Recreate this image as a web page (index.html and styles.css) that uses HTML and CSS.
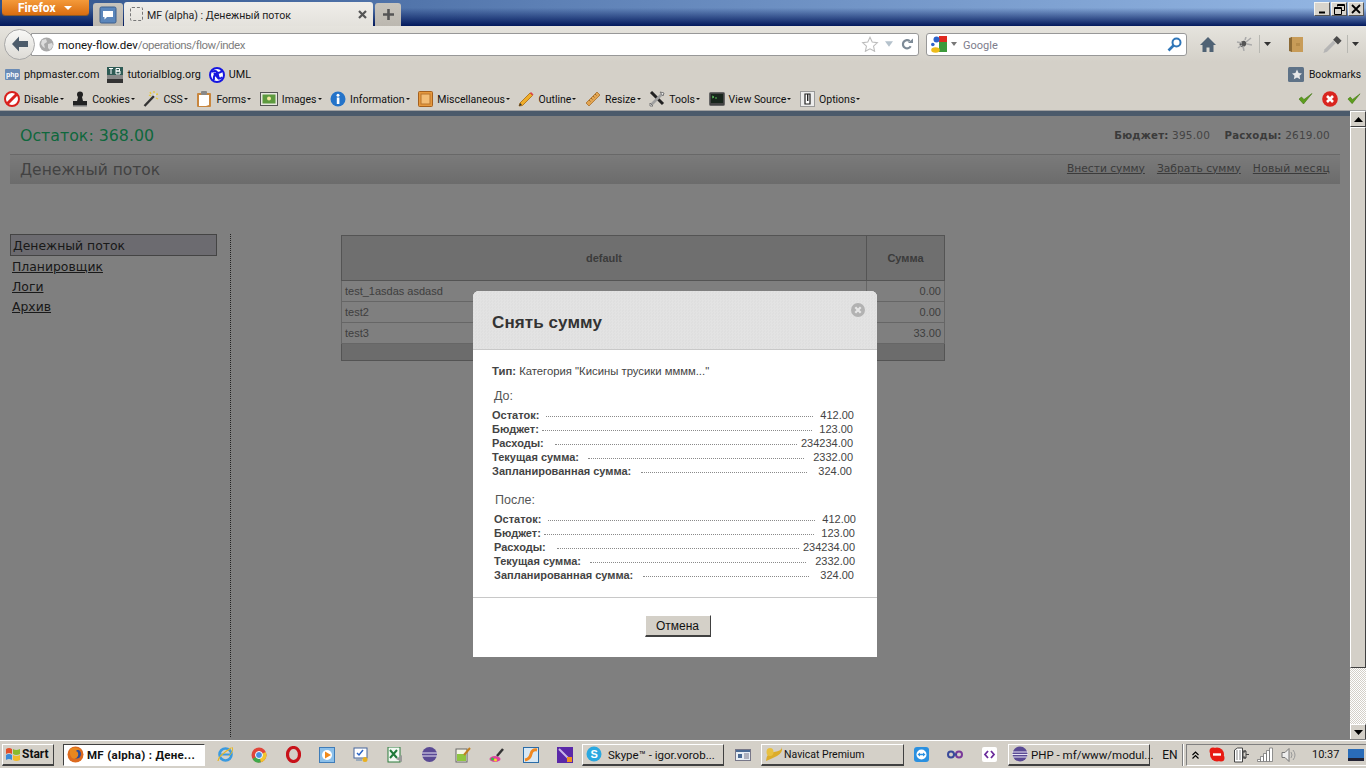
FILE: index.html
```html
<!DOCTYPE html>
<html lang="en">
<head>
    <meta charset="UTF-8">
    <meta name="viewport" content="width=device-width, initial-scale=1.0">
    <title>MF (alpha) : Денежный поток</title>
    <link rel="stylesheet" href="styles.css">
</head>
<body>
    <!-- Browser title bar with tabs -->
    <div class="titlebar">
        <div class="ff-button">Firefox <span class="ff-arrow"></span></div>
        <div class="tab-side tab-panorama">
            <svg width="18" height="18" viewBox="0 0 18 18"><rect x="1" y="1" width="16" height="16" rx="1.5" fill="#5b86bb" stroke="#3c5f8d"/><path d="M4 5h10v6H8l-2.5 2.5V11H4z" fill="#fff"/></svg>
        </div>
        <div class="tab-active">
            <span class="tab-favicon"></span>
            <span class="tab-title">MF (alpha) : Денежный поток</span>
            <svg width="9" height="9" viewBox="0 0 9 9"><path d="M1 1l7 7M8 1L1 8" stroke="#555" stroke-width="2.2"/></svg>
        </div>
        <div class="tab-side tab-new">
            <svg width="13" height="13" viewBox="0 0 13 13"><path d="M6.5 1v11M1 6.5h11" stroke="#555" stroke-width="2.6"/></svg>
        </div>
        <div class="win-buttons">
            <div class="win-btn"><svg width="9" height="9" viewBox="0 0 9 9"><path d="M1 7.5h6" stroke="#000" stroke-width="2"/></svg></div>
            <div class="win-btn"><svg width="11" height="11" viewBox="0 0 11 11"><path d="M3.5 2.5V.5h7v6H8M.5 3.5h7v7h-7z" fill="none" stroke="#000"/><path d="M3 1.5h7M0 4.5h8" stroke="#000"/></svg></div>
            <div class="win-btn"><svg width="10" height="10" viewBox="0 0 10 10"><path d="M1 1l8 8M9 1L1 9" stroke="#000" stroke-width="1.8"/></svg></div>
        </div>
    </div>

    <!-- Navigation bar -->
    <div class="navbar">
        <div class="back-btn">
            <svg width="20" height="18" viewBox="0 0 20 18"><path d="M9 1.5L2 9l7 7.5V12h9V6H9z" fill="#4d5c6b"/></svg>
        </div>
        <div class="urlbar">
            <svg class="globe" width="15" height="15" viewBox="0 0 15 15"><circle cx="7.5" cy="7.5" r="7" fill="#a9a9a9"/><path d="M3 3l4-1 1 3-3 2 1 4-2-1-2-3zM9 7l4-1 1 3-3 4-2-2z" fill="#dcdcdc"/></svg>
            <span class="url-host">money-flow.dev</span><span class="url-path">/operations/flow/index</span>
            <svg class="url-star" width="18" height="16" viewBox="0 0 20 18"><path d="M10 1.5l2.5 5.3 5.8.7-4.3 4 1.2 5.7L10 14.4l-5.2 2.8L6 11.500l-4.300-4 5.800-.7z" fill="#fff" stroke="#bcbcbc" stroke-width="1.2"/></svg>
            <svg class="url-drop" width="8" height="6" viewBox="0 0 10 7"><path d="M0 0h10L5 7z" fill="#b5c2cc"/></svg>
            <svg class="url-reload" width="12" height="12" viewBox="0 0 13 13"><path d="M10.5 9A4.5 4.5 0 1 1 9.5 3.3" fill="none" stroke="#7d8a96" stroke-width="2.4"/><path d="M7.5 5.5L13 .5v5z" fill="#7d8a96"/></svg>
        </div>
        <div class="searchbar">
            <svg width="16" height="17" viewBox="0 0 16 17"><rect x="8" y="0" width="8" height="6" fill="#e02a20"/><rect x="8" y="6" width="8" height="10" fill="#3d9a3c"/><rect x="0" y="7" width="8" height="5" fill="#fff"/><circle cx="5.5" cy="3.5" r="3" fill="#2c62c9"/><circle cx="1.8" cy="8.5" r="1.8" fill="#2c62c9"/><ellipse cx="4.5" cy="14" rx="4.3" ry="2.7" fill="#edbb19"/></svg>
            <svg class="search-drop" width="6" height="4" viewBox="0 0 6 4"><path d="M0 0h6L3 4z" fill="#777"/></svg>
            <span class="search-text">Google</span>
            <svg width="15" height="15" viewBox="0 0 15 15"><circle cx="9.5" cy="5.5" r="4" fill="none" stroke="#2f76b8" stroke-width="2"/><path d="M6.5 8.5L1.5 13.5" stroke="#2f76b8" stroke-width="2.6"/></svg>
        </div>
        <svg class="nav-home" width="16" height="15" viewBox="0 0 16 15"><path d="M8 0L0 8h2.5v7h4v-4.5h3V15h4V8H16z" fill="#4f6274"/></svg>
        <svg class="nav-bug" width="16" height="14" viewBox="0 0 16 14"><ellipse cx="7" cy="7" rx="3.5" ry="2.8" fill="#555" transform="rotate(-30 7 7)"/><path d="M1 5l5 1M2 11l4-3M7 9l1 5M10 5l5-4M11 7l5 1M9 3l1-3" stroke="#aaa" stroke-width="1.5"/></svg>
        <span class="nav-sep"></span>
        <svg class="nav-arrow" width="7" height="4" viewBox="0 0 7 4"><path d="M0 0h7L3.5 4z" fill="#333"/></svg>
        <svg class="nav-book" width="14" height="15" viewBox="0 0 14 15"><path d="M2 0h12v15H2z" fill="#c89c58"/><path d="M0 1l3-1v15l-3-1z" fill="#8c6a35"/><path d="M8 6v3M10 6v3" stroke="#a67c3c"/></svg>
        <svg class="nav-dropper" width="19" height="17" viewBox="0 0 15 14"><path d="M0 14l1-3 7-7 2 2-7 7z" fill="#b5b5b5"/><path d="M8 3l3-3 4 4-3 3z" fill="#4a4a4a"/></svg>
        <span class="nav-sep nav-sep-last"></span>
        <svg class="nav-arrow" width="7" height="4" viewBox="0 0 7 4"><path d="M0 0h7L3.5 4z" fill="#333"/></svg>
    </div>

    <!-- Bookmarks toolbar -->
    <div class="bookmarks">
        <div class="bm-item">
            <svg width="15" height="14" viewBox="0 0 15 14"><rect y="1" width="15" height="11" rx="1" fill="#6a8bb5"/><text x="1" y="9" class="bm-php">php</text></svg>
            phpmaster.com
        </div>
        <div class="bm-item">
            <svg width="16" height="16" viewBox="0 0 16 16"><rect width="16" height="8" fill="#2e5b55"/><rect y="8" width="16" height="4" fill="#888"/><rect y="12" width="16" height="4" fill="#333"/><path d="M2 1.5h4M4 1.5V7M9 1.5V7M9 1.5h3.5v2.5H9M9 4h4v3H9" stroke="#fff" fill="none"/></svg>
            tutorialblog.org
        </div>
        <div class="bm-item">
            <svg width="16" height="16" viewBox="0 0 16 16"><circle cx="8" cy="8" r="7" fill="#fff" stroke="#1616e0" stroke-width="2"/><path d="M3 5q5-3 6 3t4 2M5 13q-1-6 4-7t3-3M5 6l5 6" fill="none" stroke="#1616e0" stroke-width="2"/></svg>
            UML
        </div>
        <div class="bm-right">
            <svg width="16" height="15" viewBox="0 0 16 15"><rect width="16" height="15" rx="1.5" fill="#5e7287"/><path d="M9 2.5l1.6 3.5 3.4.4-2.5 2.4.7 3.5L9 10.5l-3.2 1.8.7-3.5L4 6.4 7.4 6z" fill="#e8e8e8"/></svg>
            Bookmarks
        </div>
    </div>

    <!-- Web developer toolbar -->
    <div class="devbar">
        <div class="dev-item">
            <svg width="16" height="16" viewBox="0 0 16 16"><circle cx="8" cy="8" r="7" fill="#fff" stroke="#d9201c" stroke-width="2"/><path d="M3.5 12.5l9-9" stroke="#d9201c" stroke-width="3"/></svg>
            <span class="dev-label">Disable</span>
        </div>
        <div class="dev-item">
            <svg width="16" height="16" viewBox="0 0 16 16"><circle cx="8" cy="3.5" r="3" fill="#222"/><path d="M6 6h4l1 4h4v4H1v-4h4z" fill="#222"/><rect x="1" y="14" width="14" height="1.5" fill="#777"/></svg>
            <span class="dev-label">Cookies</span>
        </div>
        <div class="dev-item">
            <svg width="16" height="16" viewBox="0 0 16 16"><path d="M1.5 15L11 5" stroke="#333" stroke-width="2.4"/><path d="M11 5l2-2" stroke="#ddd" stroke-width="2.4"/><path d="M7 1l1 2M13 7l2 1M11 0v2M15 3l-2 .5M8 5l-2-1" stroke="#e8c93a" stroke-width="1.3"/></svg>
            <span class="dev-label">CSS</span>
        </div>
        <div class="dev-item">
            <svg width="16" height="16" viewBox="0 0 16 16"><rect x="1" y="2" width="14" height="14" rx="1" fill="#c8863e"/><path d="M3 4h10v10l-3 1H3z" fill="#fff"/><rect x="5" y="0" width="6" height="4" rx="1" fill="#888"/></svg>
            <span class="dev-label">Forms</span>
        </div>
        <div class="dev-item">
            <svg width="18" height="14" viewBox="0 0 18 14"><rect x=".5" y=".5" width="17" height="13" fill="#e8e8e0" stroke="#555"/><rect x="2.5" y="2.5" width="13" height="9" fill="#5d9a3e"/><circle cx="9" cy="6.5" r="2" fill="#f0e8a0"/></svg>
            <span class="dev-label">Images</span>
        </div>
        <div class="dev-item">
            <svg width="16" height="16" viewBox="0 0 16 16"><circle cx="8" cy="8" r="7.5" fill="#2473c9"/><rect x="6.8" y="6.5" width="2.6" height="6.5" fill="#fff"/><circle cx="8" cy="4.2" r="1.5" fill="#fff"/></svg>
            <span class="dev-label">Information</span>
        </div>
        <div class="dev-item">
            <svg width="15" height="16" viewBox="0 0 15 16"><rect x=".5" y=".5" width="14" height="15" rx="1" fill="#e6993e" stroke="#a4601e"/><rect x="3" y="3" width="9" height="10" fill="#f3bd76" stroke="#b8752c"/></svg>
            <span class="dev-label">Miscellaneous</span>
        </div>
        <div class="dev-item">
            <svg width="16" height="16" viewBox="0 0 16 16"><path d="M2 12L12 2l2.5 2.5-10 10L1 15z" fill="#f0ae2a" stroke="#a86a10" stroke-width=".8"/><path d="M12 2l1-1 2.5 2.5-1 1z" fill="#e0404a"/><path d="M1 15l1-3 2 2z" fill="#333"/></svg>
            <span class="dev-label">Outline</span>
        </div>
        <div class="dev-item">
            <svg width="16" height="16" viewBox="0 0 16 16"><path d="M1 12L12 1l3 3L4 15z" fill="#e2a552" stroke="#a8702c" stroke-width=".8"/><path d="M4 9l1.5 1.5M6 7l1.5 1.5M8 5l1.5 1.5M10 3l1.5 1.5" stroke="#8a5a20" stroke-width=".8"/></svg>
            <span class="dev-label">Resize</span>
        </div>
        <div class="dev-item">
            <svg width="16" height="16" viewBox="0 0 16 16"><path d="M2 1l12 12" stroke="#222" stroke-width="3"/><path d="M14 2L2 14" stroke="#a0a0a0" stroke-width="2.6"/><path d="M11 1l4 1-1 3z" fill="#fff" stroke="#777"/><path d="M1 12l3 3-3 0z" fill="#fff" stroke="#777"/></svg>
            <span class="dev-label">Tools</span>
        </div>
        <div class="dev-item">
            <svg width="16" height="14" viewBox="0 0 16 14"><rect x=".5" y=".5" width="15" height="13" rx="1" fill="#444" stroke="#666"/><rect x="2" y="2" width="12" height="9" fill="#18251c"/><path d="M3 4l2 1-2 1M6 6h2" stroke="#6be06b" stroke-width=".8" fill="none"/></svg>
            <span class="dev-label">View Source</span>
        </div>
        <div class="dev-item">
            <svg width="15" height="16" viewBox="0 0 15 16"><rect x=".5" y=".5" width="14" height="15" fill="#ececec" stroke="#999"/><path d="M5 3h5v10H5z" fill="#fff" stroke="#222" stroke-width="1.2"/><rect x="7" y="3" width="1.4" height="7" fill="#222"/></svg>
            <span class="dev-label">Options</span>
        </div>
        <div class="dev-status">
            <svg width="15" height="13" viewBox="0 0 15 13"><path d="M1 7l4.5 5L14 1.5 6 7.5 3.5 5z" fill="#5d9e1e" stroke="#3e7410" stroke-width=".6"/></svg>
            <svg width="16" height="16" viewBox="0 0 16 16"><circle cx="8" cy="8" r="7.8" fill="#d9251f"/><path d="M5 5l6 6M11 5l-6 6" stroke="#fff" stroke-width="2.6"/></svg>
            <svg width="14" height="13" viewBox="0 0 15 13"><path d="M1 7l4.5 5L14 1.5 6 7.5 3.5 5z" fill="#5d9e1e" stroke="#3e7410" stroke-width=".6"/></svg>
        </div>
    </div>

    <!-- Viewport -->
    <div class="viewport">
        <div class="page">
            <div class="page-strip"></div>
            <div class="summary">
                <div class="balance">Остаток: 368.00</div>
                <div class="budget"><strong>Бюджет:</strong> 395.00 <strong class="spent">Расходы:</strong> 2619.00</div>
            </div>
            <div class="heading">
                <h1>Денежный поток</h1>
                <div class="heading-links">
                    <a href="#">Внести сумму</a>
                    <a href="#">Забрать сумму</a>
                    <a href="#">Новый месяц</a>
                </div>
            </div>
            <div class="content">
                <ul class="sidebar">
                    <li class="sidebar-active">Денежный поток</li>
                    <li><a href="#">Планировщик</a></li>
                    <li><a href="#">Логи</a></li>
                    <li><a href="#">Архив</a></li>
                </ul>
                <div class="main">
                    <table class="flow-table">
                        <thead>
                            <tr><th>default</th><th class="col-sum">Сумма</th></tr>
                        </thead>
                        <tbody>
                            <tr><td>test_1asdas asdasd</td><td class="num">0.00</td></tr>
                            <tr><td>test2</td><td class="num">0.00</td></tr>
                            <tr><td>test3</td><td class="num">33.00</td></tr>
                        </tbody>
                        <tfoot>
                            <tr><td colspan="2"></td></tr>
                        </tfoot>
                    </table>
                </div>
            </div>

            <div class="overlay"></div>

            <div class="modal">
                <div class="modal-head">
                    <h2>Снять сумму</h2>
                    <svg class="modal-close" width="14" height="14" viewBox="0 0 14 14"><circle cx="7" cy="7" r="7" fill="#b2b2b2"/><path d="M4.3 4.3l5.4 5.4M9.7 4.3l-5.4 5.4" stroke="#e6e6e6" stroke-width="2.2"/></svg>
                </div>
                <div class="modal-body">
                    <p class="modal-type"><strong>Тип:</strong> Категория "Кисины трусики мммм..."</p>
                    <div class="state">
                        <h3>До:</h3>
                        <div class="state-row"><strong>Остаток:</strong><span class="dots"></span><span>412.00</span></div>
                        <div class="state-row"><strong>Бюджет:</strong><span class="dots"></span><span>123.00</span></div>
                        <div class="state-row"><strong>Расходы:</strong><span class="dots"></span><span>234234.00</span></div>
                        <div class="state-row"><strong>Текущая сумма:</strong><span class="dots"></span><span>2332.00</span></div>
                        <div class="state-row"><strong>Запланированная сумма:</strong><span class="dots"></span><span>324.00</span></div>
                    </div>
                    <div class="state state-after">
                        <h3>После:</h3>
                        <div class="state-row"><strong>Остаток:</strong><span class="dots"></span><span>412.00</span></div>
                        <div class="state-row"><strong>Бюджет:</strong><span class="dots"></span><span>123.00</span></div>
                        <div class="state-row"><strong>Расходы:</strong><span class="dots"></span><span>234234.00</span></div>
                        <div class="state-row"><strong>Текущая сумма:</strong><span class="dots"></span><span>2332.00</span></div>
                        <div class="state-row"><strong>Запланированная сумма:</strong><span class="dots"></span><span>324.00</span></div>
                    </div>
                </div>
                <div class="modal-foot">
                    <button class="cancel-btn">Отмена</button>
                </div>
            </div>
        </div>

        <div class="scrollbar">
            <div class="sb-btn"><svg width="9" height="5" viewBox="0 0 9 5"><path d="M0 5h9L4.5 0z" fill="#000"/></svg></div>
            <div class="sb-thumb"></div>
            <div class="sb-track"></div>
            <div class="sb-btn"><svg width="9" height="5" viewBox="0 0 9 5"><path d="M0 0h9L4.5 5z" fill="#000"/></svg></div>
        </div>
    </div>

    <!-- Windows taskbar -->
    <div class="taskbar">
        <div class="start-btn">
            <svg width="16" height="15" viewBox="0 0 16 15"><path d="M1 2q3-2 6 0v5q-3-2-6 0z" fill="#e2502a"/><path d="M8 2q3 2 7 0v5q-4 2-7 0z" fill="#8abb2d"/><path d="M1 8q3-2 6 0v5q-3-2-6 0z" fill="#3a8ad8"/><path d="M8 8q3 2 7 0v5q-4 2-7 0z" fill="#f2bb2a"/></svg>
            Start
        </div>
        <div class="task task-active">
            <svg width="17" height="17" viewBox="0 0 17 17"><circle cx="8.5" cy="8.5" r="8" fill="#dc6a1e"/><circle cx="9.5" cy="8" r="4.5" fill="#2c4d9a"/><path d="M3 3q6-3 11 1-4-1-5 1 3 1 2 5-2 4-6 2-3-3-2-9z" fill="#e8871f"/></svg>
            <span class="task-text">MF (alpha) : Дене...</span>
        </div>
        <div class="quick">
            <svg width="17" height="17" viewBox="0 0 17 17"><circle cx="8.5" cy="8.5" r="6" fill="none" stroke="#3a9ae0" stroke-width="2.6"/><path d="M4 8.5h9" stroke="#3a9ae0" stroke-width="2"/><path d="M1 15Q1 10 14 2" fill="none" stroke="#e8b820" stroke-width="1.2"/><path d="M15 1q2 4-3 9" fill="none" stroke="#e8b820" stroke-width="1"/></svg>
        </div>
        <div class="quick">
            <svg width="16" height="16" viewBox="0 0 16 16"><circle cx="8" cy="8" r="7.5" fill="#e0453a"/><path d="M8 8L1.5 12A7.5 7.5 0 0 0 10 15.3z" fill="#3faa4a"/><path d="M8 8l2 7.3A7.5 7.5 0 0 0 14.8 5z" fill="#f1c52e"/><circle cx="8" cy="8" r="3.5" fill="#4a8ee0" stroke="#fff"/></svg>
        </div>
        <div class="quick">
            <svg width="15" height="17" viewBox="0 0 15 17"><ellipse cx="7.5" cy="8.5" rx="6" ry="7" fill="none" stroke="#c8121a" stroke-width="3.2"/></svg>
        </div>
        <div class="quick">
            <svg width="16" height="16" viewBox="0 0 16 16"><rect x=".5" y=".5" width="15" height="15" fill="#8cc0ea" stroke="#3f7cb8"/><circle cx="8" cy="8" r="5" fill="#fff"/><path d="M6 4.5L12 8l-6 3.5z" fill="#f08a1c"/></svg>
        </div>
        <div class="quick">
            <svg width="16" height="16" viewBox="0 0 16 16"><rect x="1" y="1" width="13" height="10" fill="#fff" stroke="#44659c"/><path d="M4 6l2 2 4-5" stroke="#2a64c4" fill="none" stroke-width="1.5"/><circle cx="12" cy="12.5" r="2.5" fill="#e8b020"/><rect x="3" y="12" width="6" height="2" fill="#9ab"/></svg>
        </div>
        <div class="quick">
            <svg width="16" height="16" viewBox="0 0 16 16"><rect x="1" y="0" width="12" height="15" fill="#f2f8f2" stroke="#2a7a3a"/><path d="M3 3l7 8M10 3l-7 8" stroke="#1f7a3a" stroke-width="2"/><path d="M9 12l6 3V8z" fill="#9a9a9a"/></svg>
        </div>
        <div class="quick">
            <svg width="15" height="15" viewBox="0 0 15 15"><circle cx="7.5" cy="7.5" r="7.5" fill="#5a4a94"/><path d="M0 6h15M0 9h15" stroke="#e8e4f4" stroke-width="1"/></svg>
        </div>
        <div class="quick">
            <svg width="16" height="16" viewBox="0 0 16 16"><rect x="1" y="2" width="11" height="13" fill="#f4f4e4" stroke="#666"/><rect x="2" y="7" width="9" height="7" fill="#8ec63f"/><path d="M15 1L9 8" stroke="#c08020" stroke-width="2"/></svg>
        </div>
        <div class="quick">
            <svg width="17" height="17" viewBox="0 0 17 17"><ellipse cx="6" cy="13" rx="5.5" ry="3" fill="#e040a0"/><circle cx="3.5" cy="13" r="1.5" fill="#30c040"/><circle cx="6.5" cy="14" r="1.5" fill="#f0e020"/><path d="M8 10l6-7" stroke="#333" stroke-width="2.5"/></svg>
        </div>
        <div class="quick">
            <svg width="16" height="16" viewBox="0 0 16 16"><rect x=".5" y=".5" width="15" height="15" fill="#d8e8f4" stroke="#2a6ca8"/><path d="M2 13Q7 12 8 7T14 3" fill="none" stroke="#f08820" stroke-width="3"/></svg>
        </div>
        <div class="quick">
            <svg width="16" height="16" viewBox="0 0 16 16"><rect width="16" height="16" fill="#5a28a8"/><path d="M2 2l10 10" stroke="#c8b8e8" stroke-width="2"/><path d="M10 10h5v5h-5z" fill="#f09020"/></svg>
        </div>
        <div class="task">
            <svg width="16" height="16" viewBox="0 0 16 16"><circle cx="8" cy="8" r="7.5" fill="#2aa8e0"/><text x="4.5" y="12" class="skype-s">S</text></svg>
            <span class="task-text">Skype™ - igor.vorob...</span>
        </div>
        <div class="quick quick-wide">
            <svg width="16" height="12" viewBox="0 0 16 12"><rect x=".5" y=".5" width="15" height="11" fill="#e8eef4" stroke="#778"/><rect x="1" y="1" width="14" height="2" fill="#4a6a94"/><rect x="3" y="5" width="4" height="4" fill="#4a6a94"/><path d="M9 5h5M9 7h5M9 9h5" stroke="#778"/></svg>
        </div>
        <div class="task task-navicat">
            <svg width="18" height="16" viewBox="0 0 18 16"><path d="M1 15Q1 7 9 6T17 1q1 6-5 9T1 15z" fill="#dcac2a"/><ellipse cx="5" cy="6" rx="3.5" ry="4" fill="#e8c040"/></svg>
            <span class="task-text">Navicat Premium</span>
        </div>
        <div class="quick">
            <svg width="15" height="16" viewBox="0 0 15 16"><rect width="15" height="15" rx="3" fill="#2a90e0"/><circle cx="7.5" cy="7.5" r="5" fill="#fff"/><path d="M3.5 7.5l2.5-2v1.3h3V5.5l2.5 2-2.5 2V8.2H6v1.3z" fill="#2a90e0"/></svg>
        </div>
        <div class="quick">
            <svg width="16" height="9" viewBox="0 0 16 9"><circle cx="4" cy="4.5" r="3" fill="none" stroke="#3a4a9a" stroke-width="2"/><circle cx="12" cy="4.5" r="3" fill="none" stroke="#7a3a9a" stroke-width="2"/><path d="M6 4.5h4" stroke="#3a4a9a" stroke-width="2"/></svg>
        </div>
        <div class="quick">
            <svg width="15" height="15" viewBox="0 0 15 15"><rect width="15" height="15" rx="2" fill="#fff"/><path d="M6 4L3 7.5 6 11M9 4l3 3.5L9 11" fill="none" stroke="#6a2a9a" stroke-width="1.8"/></svg>
        </div>
        <div class="task task-php">
            <svg width="16" height="16" viewBox="0 0 16 16"><circle cx="8" cy="8" r="7.5" fill="#5a4a94"/><path d="M0 6h16M0 8.5h16M1 11h14" stroke="#e8e4f4" stroke-width="1"/></svg>
            <span class="task-text">PHP - mf/www/modul...</span>
        </div>
        <div class="lang">EN</div>
        <div class="tray-grip"></div>
        <div class="tray">
            <svg width="7" height="8" viewBox="0 0 7 8"><path d="M.5 4l3-3 3 3M.5 7.5l3-3 3 3" fill="none" stroke="#000" stroke-width="1.2"/></svg>
            <svg class="tray-skype" width="16" height="15" viewBox="0 0 16 15"><circle cx="8" cy="7.5" r="7" fill="#e81a12"/><circle cx="4" cy="4" r="3.5" fill="#e81a12"/><circle cx="12" cy="11" r="3.5" fill="#e81a12"/><rect x="4" y="6.3" width="8" height="2.4" fill="#fff"/></svg>
            <svg class="tray-icon" width="16" height="16" viewBox="0 0 16 16"><path d="M1.5 3l3-2h5v14h-8z" fill="#fff" stroke="#444"/><path d="M4 3v10M7 3v10" stroke="#888"/><path d="M10 5h2V3M10 10h2v2M10 4h3v7h-3zM13 7.5h3" fill="none" stroke="#444"/></svg>
            <svg class="tray-icon" width="16" height="15" viewBox="0 0 16 15"><path d="M.5 14.5v-2h3v2zM3.5 14.5v-5h3v5zM6.5 14.5v-8h3v8zM9.5 14.5v-11h3v11zM12.5 14.5V1h3v13.5z" fill="#fff" stroke="#777" stroke-width=".8"/></svg>
            <svg class="tray-icon" width="16" height="16" viewBox="0 0 16 16"><path d="M1 5.5h3L8 1.5v13l-4-4H1z" fill="#eee" stroke="#777"/><path d="M10 5q2 3 0 6M12 3q4 5 0 10" fill="none" stroke="#999"/></svg>
            <span class="clock">10:37</span>
            <svg class="tray-desktop" width="16" height="12" viewBox="0 0 16 12"><rect width="16" height="12" fill="#2a6cb8"/><rect y="9" width="16" height="3" fill="#223"/></svg>
        </div>
    </div>
</body>
</html>
```

FILE: styles.css
```css
* {
    box-sizing: border-box;
}
html, body {
    margin: 0;
    padding: 0;
}
body {
    width: 1366px;
    height: 768px;
    overflow: hidden;
    display: flex;
    flex-direction: column;
    background-color: #d4d0c8;
    font-family: Roboto, sans-serif;
    font-size: 11px;
    color: #111;
}
svg {
    display: block;
    flex: none;
}

/* Title bar */
.titlebar {
    height: 26px;
    flex: none;
    display: flex;
    align-items: flex-end;
    padding-left: 1px;
    position: relative;
    background: linear-gradient(to bottom, rgba(0,20,90,0) 30%, #03195c 100%), linear-gradient(to right, #30538c, #5d80b5 40%, #94b7e4);
}
.ff-button {
    align-self: flex-start;
    width: 87px;
    height: 15px;
    margin-left: 1px;
    border-radius: 0 0 3px 3px;
    background: linear-gradient(to bottom, #f49a3a, #d96d10);
    box-shadow: 0 1px 0 #8a5a28;
    color: #fff;
    font-weight: bold;
    font-size: 12px;
    line-height: 16px;
    padding-left: 16px;
}
.ff-arrow {
    display: inline-block;
    margin-left: 5px;
    vertical-align: 2px;
    border-top: 4px solid #fff;
    border-left: 4px solid transparent;
    border-right: 4px solid transparent;
}
.tab-side {
    height: 23px;
    background: linear-gradient(to bottom, #c8c4bc, #bcb8b0);
    border-radius: 3px 3px 0 0;
    display: flex;
    align-items: center;
    justify-content: center;
}
.tab-panorama {
    width: 30px;
    margin-left: 4px;
}
.tab-new {
    width: 26px;
    margin-left: 2px;
}
.tab-active {
    width: 249px;
    height: 24px;
    margin-left: 1px;
    background: linear-gradient(to bottom, #f0eeea, #e4e2dc);
    border-radius: 3px 3px 0 0;
    display: flex;
    align-items: center;
    padding: 0 6px;
}
.tab-favicon {
    width: 13px;
    height: 14px;
    border: 1px dashed #777;
    border-radius: 2px;
    margin-right: 4px;
}
.tab-title {
    flex: 1;
    padding-top: 2px;
    font-size: 10.6px;
    color: #222;
}
.win-buttons {
    position: absolute;
    top: 2px;
    right: 2px;
    display: flex;
    gap: 1px;
}
.win-btn {
    width: 16px;
    height: 14px;
    background-color: #d8d4cc;
    border: 1px solid #f4f4f0;
    border-right-color: #555;
    border-bottom-color: #555;
    display: flex;
    align-items: center;
    justify-content: center;
}

/* Navigation bar */
.navbar {
    height: 36px;
    flex: none;
    display: flex;
    align-items: center;
    padding-left: 4px;
    background: linear-gradient(to bottom, #e6e4de, #d4d0c8);
}
.back-btn {
    width: 31px;
    height: 31px;
    border-radius: 50%;
    border: 1px solid #a8a8a8;
    background: linear-gradient(to bottom, #f8f8f6, #dddbd6);
    display: flex;
    align-items: center;
    justify-content: center;
    position: relative;
    z-index: 1;
}
.urlbar {
    width: 888px;
    height: 23px;
    margin-left: -4px;
    background-color: #fff;
    border: 1px solid #989898;
    border-radius: 0 3px 3px 0;
    display: flex;
    align-items: center;
    padding-left: 7px;
    font-size: 11.5px;
}
.globe {
    margin-right: 4px;
}
.url-host {
    padding-top: 2px;
    color: #111;
}
.url-path {
    flex: 1;
    padding-top: 2px;
    letter-spacing: -.5px;
    color: #808080;
}
.url-star {
    margin-right: 6px;
}
.url-drop {
    margin-right: 8px;
}
.url-reload {
    margin-right: 5px;
}
.searchbar {
    width: 261px;
    height: 23px;
    margin-left: 7px;
    background-color: #fff;
    border: 1px solid #989898;
    border-radius: 3px;
    display: flex;
    align-items: center;
    padding: 0 4px;
}
.search-drop {
    margin: 0 4px;
}
.search-text {
    flex: 1;
    margin-left: 2px;
    padding-top: 2px;
    color: #7d7d8c;
    font-size: 11px;
}
.nav-home {
    margin-left: 13px;
}
.nav-bug {
    margin-left: 20px;
}
.nav-sep {
    width: 1px;
    height: 18px;
    margin-left: 7px;
    background-color: #b8b8b2;
}
.nav-sep-last {
    margin-left: 5px;
}
.nav-arrow {
    margin-left: 4px;
}
.nav-book {
    margin-left: 18px;
}
.nav-dropper {
    margin-left: 20px;
}

/* Bookmarks */
.bookmarks {
    height: 25px;
    flex: none;
    display: flex;
    align-items: center;
    padding-left: 5px;
    gap: 8px;
    font-size: 10.8px;
}
.bm-item {
    display: flex;
    align-items: center;
    gap: 4px;
}
.bm-php {
    font-family: "Liberation Sans", sans-serif;
    font-size: 7px;
    font-weight: bold;
    fill: #fff;
}
.bm-right {
    margin-left: auto;
    margin-right: 5px;
    display: flex;
    align-items: center;
    gap: 5px;
    font-size: 10.3px;
}

/* Web developer toolbar */
.devbar {
    height: 24px;
    flex: none;
    display: flex;
    align-items: center;
    padding-left: 4px;
    gap: 8.6px;
    font-size: 10.5px;
    border-bottom: 1px solid #a0a0a0;
}
.dev-item {
    display: flex;
    align-items: center;
    gap: 4px;
}
.dev-label {
    padding-top: 2px;
}
.dev-label::after {
    content: "";
    display: inline-block;
    margin-left: 1px;
    vertical-align: 3px;
    border-top: 2px solid #111;
    border-left: 2px solid transparent;
    border-right: 2px solid transparent;
}
.dev-status {
    margin-left: auto;
    margin-right: 5px;
    display: flex;
    align-items: center;
    gap: 9px;
}

/* Page inside the browser */
.viewport {
    flex: 1;
    min-height: 0;
    display: flex;
}
.page {
    flex: 1;
    position: relative;
    background-color: #fff;
    font-family: "DejaVu Sans", sans-serif;
    overflow: hidden;
}
.page-strip {
    height: 5px;
    background-color: #96b4d6;
}
.summary {
    height: 38px;
    padding: 0 20px;
    display: flex;
    align-items: center;
    justify-content: space-between;
}
.balance {
    color: #1cd07a;
    font-size: 15.8px;
}
.budget {
    color: #888;
    font-size: 10.5px;
    letter-spacing: .2px;
}
.budget strong {
    color: #777;
    font-size: 10.2px;
}
.budget .spent {
    margin-left: 11px;
}
.heading {
    height: 30px;
    margin: 0 10px;
    border-top: 1px solid #d0d0d0;
    background: linear-gradient(to bottom, #f6f6f6, #d8d8d8);
    display: flex;
    align-items: center;
    justify-content: space-between;
    padding: 0 10px;
}
.heading h1 {
    margin: 0;
    font-size: 15.5px;
    font-weight: normal;
    color: #858585;
}
.heading-links {
    display: flex;
    gap: 12px;
    padding-bottom: 3px;
}
.heading-links a {
    color: #777;
    font-size: 10.7px;
}
.heading-links a:last-child {
    letter-spacing: .3px;
}
.content {
    margin-top: 50px;
    padding-left: 10px;
    display: flex;
}
.sidebar {
    width: 221px;
    height: 503px;
    margin: 0;
    padding: 0 13px 0 0;
    list-style: none;
    border-right: 1px dotted #444;
    font-size: 12.4px;
}
.sidebar li {
    height: 20px;
    line-height: 20px;
    padding-left: 2px;
}
.sidebar a {
    color: #333;
}
.sidebar .sidebar-active {
    height: 22px;
    line-height: 21px;
    padding-left: 2px;
    margin-bottom: 1px;
    background-color: #d8d6e0;
    border: 1px solid #888;
    color: #333;
}
.main {
    padding-left: 110px;
    padding-top: 1px;
}
.flow-table {
    width: 604px;
    border-collapse: collapse;
    font-family: "Liberation Sans", sans-serif;
    font-size: 11px;
    color: #808080;
    border: 1px solid #a8a8a8;
}
.flow-table th {
    height: 45px;
    background-color: #dedede;
    border: 1px solid #a8a8a8;
    color: #777;
}
.col-sum {
    width: 78px;
}
.flow-table td {
    height: 21px;
    padding: 0 3px;
    border: 1px solid #ccc;
}
.flow-table .num {
    text-align: right;
}
.flow-table tfoot td {
    height: 17px;
    background-color: #d8d8d8;
    border-color: #a8a8a8;
}

/* Dimmer and dialog */
.overlay {
    position: absolute;
    inset: 0;
    background-color: rgba(0,0,0,.5);
}
.modal {
    position: absolute;
    left: 473px;
    top: 180px;
    width: 404px;
    height: 366px;
    background-color: #fff;
    border-radius: 6px 6px 0 0;
    font-family: "Liberation Sans", sans-serif;
    font-size: 11px;
    color: #444;
    display: flex;
    flex-direction: column;
}
.modal-head {
    height: 59px;
    flex: none;
    position: relative;
    background-color: #e1e1e1;
    background-image: repeating-conic-gradient(#e3e3e3 0 25%, #dfdfdf 0 50%);
    background-size: 3px 3px;
    border-bottom: 1px solid #c8c8c8;
    border-radius: 6px 6px 0 0;
    padding: 21px 19px 0;
}
.modal-head h2 {
    margin: 0;
    font-size: 17px;
    line-height: 22px;
    color: #333;
    letter-spacing: .1px;
}
.modal-close {
    position: absolute;
    top: 12px;
    right: 12px;
}
.modal-body {
    flex: 1;
    padding: 15px 19px 0;
}
.modal-type {
    margin: 0;
    line-height: 13px;
    font-size: 11.3px;
}
.state {
    margin-top: 10px;
}
.state-after {
    margin-top: 14px;
    padding-left: 2px;
}
.state h3 {
    margin: 0 0 4px 2px;
    font-size: 12.5px;
    line-height: 16px;
    font-weight: normal;
    color: #555;
}
.state-after h3 {
    margin-left: 1px;
}
.state-row {
    height: 14px;
    line-height: 14px;
    display: flex;
    align-items: center;
    width: 362px;
}
.dots {
    flex: 1;
    height: 4px;
    margin: 0 7px;
    border-bottom: 1px dotted #8a8a8a;
}
.state-row:nth-of-type(2) {
    width: 361px;
}
.state-row:nth-of-type(2) .dots { margin: 0 7px 0 3px; }
.state-row:nth-of-type(3) {
    width: 361px;
}
.state-row:nth-of-type(3) .dots { margin: 0 4px 0 11px; }
.state-row:nth-of-type(4) {
    width: 361px;
}
.state-row:nth-of-type(4) .dots { margin: 0 9px; }
.state-row:nth-of-type(5) {
    width: 360px;
}
.state-row:nth-of-type(5) .dots { margin: 0 11px 0 10px; }
.modal-foot {
    height: 60px;
    flex: none;
    border-top: 1px solid #c8c8c8;
    display: flex;
    justify-content: center;
    padding-top: 17px;
    padding-left: 5px;
}
.cancel-btn {
    width: 66px;
    height: 22px;
    padding: 0;
    font-family: "Liberation Sans", sans-serif;
    font-size: 12px;
    color: #111;
    background-color: #d4d0c8;
    border: 1px solid #fff;
    border-right-color: #404040;
    border-bottom: 2px solid #404040;
}

/* Scrollbar */
.scrollbar {
    width: 16px;
    flex: none;
    display: flex;
    flex-direction: column;
    background-color: #d4d0c8;
}
.sb-btn {
    height: 16px;
    background-color: #d4d0c8;
    border: 1px solid #fff;
    border-right-color: #404040;
    border-bottom-color: #404040;
    display: flex;
    align-items: center;
    justify-content: center;
}
.sb-thumb {
    height: 541px;
    background-color: #d4d0c8;
    border: 1px solid #fff;
    border-right-color: #404040;
    border-bottom-color: #404040;
}
.sb-track {
    flex: 1;
    background-color: #eeece8;
    background-image: repeating-conic-gradient(#fff 0 25%, #d4d0c8 0 50%);
    background-size: 2px 2px;
}

/* Taskbar */
.taskbar {
    height: 28px;
    flex: none;
    display: flex;
    align-items: center;
    padding-left: 2px;
    border-top: 1px solid #fff;
    box-shadow: 0 -1px 0 #808080;
    position: relative;
}
.start-btn {
    width: 52px;
    height: 22px;
    display: flex;
    align-items: center;
    gap: 1px;
    padding-left: 2px;
    font-weight: bold;
    font-size: 12px;
    border: 1px solid #fff;
    border-right-color: #404040;
    border-bottom: 2px solid #404040;
}
.task {
    width: 142px;
    height: 22px;
    flex: none;
    display: flex;
    align-items: center;
    gap: 6px;
    padding-left: 3px;
    border: 1px solid #fff;
    border-right-color: #404040;
    border-bottom: 2px solid #404040;
}
.task-active {
    gap: 3px;
    margin-left: 9px;
    margin-right: 3px;
    background-color: #fff;
    border: 1px solid #404040;
    border-right-color: #fff;
    border-bottom-color: #fff;
    font-weight: bold;
}
.task-navicat {
    width: 143px;
    gap: 1px;
}
.task-php {
    gap: 3px;
    margin-left: 2px;
}
.task-text {
    padding-top: 1px;
    white-space: nowrap;
    font-size: 11.5px;
}
.task-active .task-text {
    letter-spacing: .3px;
}
.task-navicat .task-text {
    font-size: 10.5px;
}
.quick {
    width: 34px;
    height: 22px;
    flex: none;
    display: flex;
    align-items: center;
    justify-content: center;
}
.quick-wide {
    width: 37px;
}
.skype-s {
    font-family: "Liberation Sans", sans-serif;
    font-size: 11px;
    font-weight: bold;
    fill: #fff;
}
.lang {
    width: 30px;
    padding-left: 10px;
    text-align: center;
    font-size: 12px;
}
.tray-grip {
    width: 2px;
    height: 22px;
    margin-left: 2px;
    border-left: 1px solid #808080;
    border-right: 1px solid #fff;
}
.tray {
    flex: 1;
    height: 22px;
    margin-left: 2px;
    display: flex;
    align-items: center;
    border: 1px solid #808080;
    border-right: none;
    border-bottom-color: #fff;
    padding-left: 5px;
}
.tray-skype {
    margin-left: 10px;
}
.tray-icon {
    margin-left: 8px;
}
.clock {
    margin-left: 15px;
    font-size: 11px;
}
.tray-desktop {
    margin-left: 9px;
}
```
